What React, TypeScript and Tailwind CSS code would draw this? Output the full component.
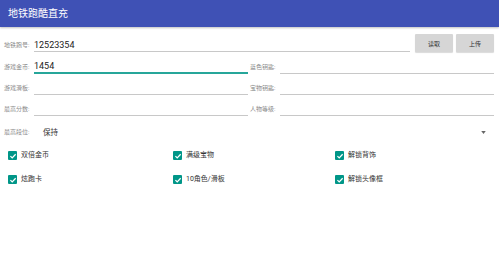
import React from "react";

const cjk = { fontFamily: "Roboto, 'Noto Sans CJK SC', sans-serif" };

function Field({
  label,
  value,
  focused,
}: {
  label: string;
  value?: string;
  focused?: boolean;
}) {
  return (
    <div className="flex flex-1 items-end h-[21px]">
      <span className="w-[29px] shrink-0 text-[6px] leading-[8px] text-[#8a8a8a] pb-[3px] whitespace-nowrap">
        {label}
      </span>
      <div
        className={
          "flex-1 h-[14px] ml-[1px] flex items-end pb-[1px] text-[9px] leading-[10px] text-[#222] " +
          (focused ? "border-b-2 border-[#26a69a]" : "border-b border-[#c8c8c8]")
        }
      >
        {value}
      </div>
    </div>
  );
}

function Check({ label }: { label: string }) {
  return (
    <div className="flex items-center gap-[4px]">
      <span className="w-[9px] h-[9px] rounded-[1px] bg-[#009688] flex items-center justify-center">
        <svg viewBox="0 0 10 10" className="w-[8px] h-[8px]">
          <path d="M1.8 5.2 L4 7.3 L8.3 2.8" fill="none" stroke="#fff" strokeWidth="1.6" />
        </svg>
      </span>
      <span className="text-[7px] leading-[9px] text-[#333]">{label}</span>
    </div>
  );
}

export default function App() {
  return (
    <div className="w-[499px] h-[265px] bg-white overflow-hidden" style={cjk}>
      <div className="h-[27px] bg-[#3f51b5] flex items-center pl-[8px] shadow-[0_1px_2px_rgba(0,0,0,0.25)]">
        <span className="text-white text-[10px] leading-[12px]">地铁跑酷直充</span>
      </div>

      <div className="px-[4px] pr-[5px]">
        <div className="flex items-center h-[20px] mt-[6px] gap-[3px]">
          <div className="flex flex-1 items-end h-[17px]">
            <span className="w-[29px] shrink-0 text-[6px] leading-[8px] text-[#8a8a8a] pb-[3px] whitespace-nowrap">
              地铁跑号:
            </span>
            <div className="flex-1 h-[14px] ml-[1px] mr-[2px] flex items-end pb-[1px] text-[9px] leading-[10px] text-[#222] border-b border-[#c8c8c8]">
              12523354
            </div>
          </div>
          <button className="w-[38px] h-[18px] bg-[#d6d6d6] rounded-[1px] text-[6px] text-[#333] shadow-[0_1px_1px_rgba(0,0,0,0.15)]">
            读取
          </button>
          <button className="w-[38px] h-[18px] bg-[#d6d6d6] rounded-[1px] text-[6px] text-[#333] shadow-[0_1px_1px_rgba(0,0,0,0.15)]">
            上传
          </button>
        </div>

        <div className="grid grid-cols-2 gap-x-[2px]">
          <Field label="游戏金币:" value="1454" focused />
          <Field label="蓝色钥匙:" />
          <Field label="游戏滑板:" />
          <Field label="宝物钥匙:" />
          <Field label="最高分数:" />
          <Field label="人物等级:" />
        </div>

        <div className="flex items-center h-[22px] mt-[5px]">
          <span className="w-[39px] text-[6px] leading-[8px] text-[#8a8a8a]">最高段位:</span>
          <span className="flex-1 text-[7.5px] leading-[9px] text-[#333]">保持</span>
          <svg viewBox="0 0 6 4" className="w-[5px] h-[3px] mr-[8px]">
            <path d="M0 0 L6 0 L3 4 Z" fill="#666" />
          </svg>
        </div>

        <div className="grid grid-cols-3 pl-[4px] mt-[8px] gap-y-[15px]">
          <Check label="双倍金币" />
          <div className="pl-[3px]">
            <Check label="满级宝物" />
          </div>
          <div className="pl-[3px]">
            <Check label="解锁背饰" />
          </div>
          <Check label="炫跑卡" />
          <div className="pl-[3px]">
            <Check label="10角色/滑板" />
          </div>
          <div className="pl-[3px]">
            <Check label="解锁头像框" />
          </div>
        </div>
      </div>
    </div>
  );
}
